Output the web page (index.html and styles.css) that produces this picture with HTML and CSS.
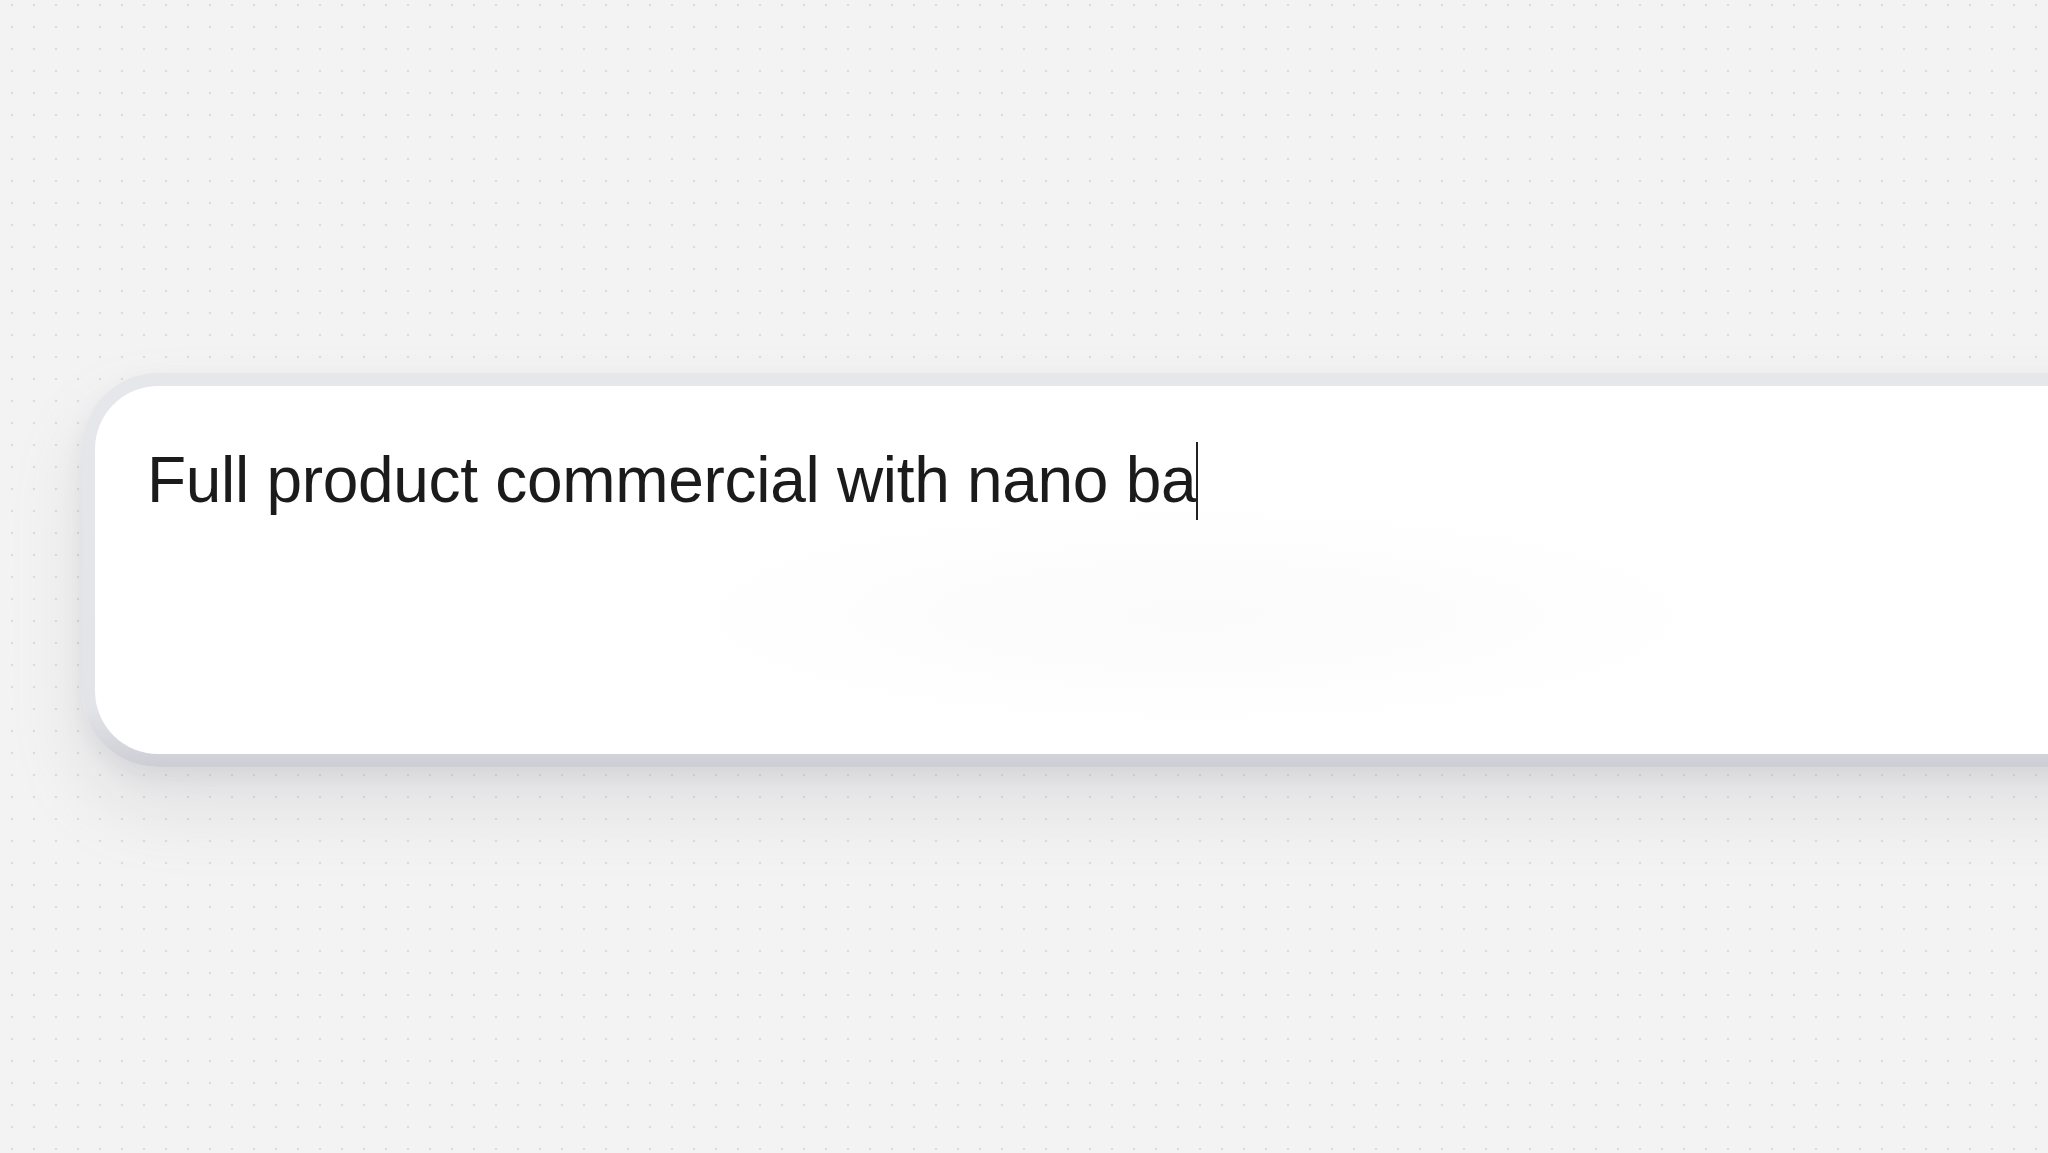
FILE: index.html
```html
<!DOCTYPE html>
<html lang="en">

<head>
    <meta charset="UTF-8">
    <meta name="viewport" content="width=device-width, initial-scale=1.0">
    <title>Prompt</title>
    <link rel="stylesheet" href="styles.css">
</head>

<body>
    <div id="stage">
        <div id="prompt-ring">
            <div id="prompt">
                <div id="prompt-text">Full product commercial with nano ba<span id="caret"></span></div>
            </div>
        </div>
    </div>
</body>

</html>
```

FILE: styles.css
```css
* {
    box-sizing: border-box;
}

body {
    margin: 0;
    height: 100vh;
    overflow: hidden;
    background-color: #f3f3f3;
    background-image: radial-gradient(circle, #dbdbdb 1px, transparent 1.6px);
    background-size: 22px 22px;
    background-position: 1px -6px;
    font-family: "Liberation Sans", Arial, sans-serif;
}

#stage {
    padding-top: 373px;
    padding-left: 82px;
}

#prompt-ring {
    width: 2100px;
    padding: 13px;
    border-radius: 76px;
    background: linear-gradient(180deg, #e6e7eb 0%, #e3e4e8 85%, #cdced5 100%);
    box-shadow: 0 40px 70px rgba(150, 150, 160, 0.2), 0 10px 20px rgba(150, 150, 160, 0.14);
}

#prompt {
    height: 368px;
    border-radius: 63px;
    padding: 56px 0 0 52px;
    background: #ffffff;
    background-image: radial-gradient(ellipse 520px 110px at 1100px 230px, #fbfbfb 0%, #fdfdfd 60%, rgba(255, 255, 255, 0) 100%);
}

#prompt-text {
    font-size: 64px;
    letter-spacing: -0.3px;
    line-height: 1;
    color: #1b1b1b;
    white-space: nowrap;
}

#caret {
    display: inline-block;
    width: 2px;
    height: 78px;
    margin-left: 0;
    vertical-align: -18px;
    background: #222222;
}
```
